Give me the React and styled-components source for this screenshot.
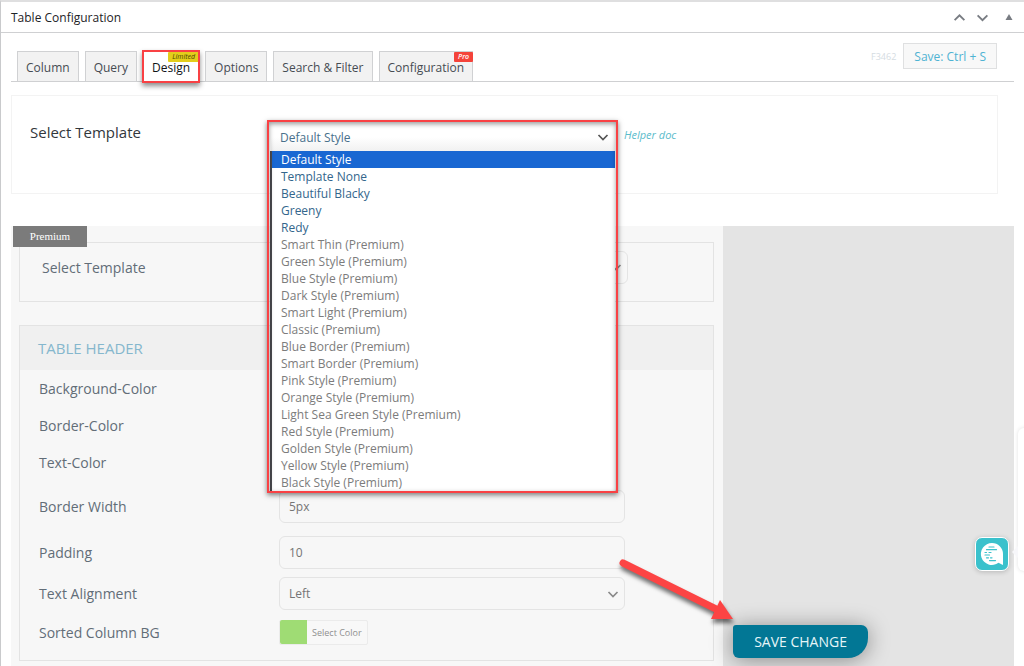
import styled, { createGlobalStyle, css } from "styled-components";

const tabs = [
  { name: "Column" },
  { name: "Query" },
  { name: "Design", badge: "Limited", active: true },
  { name: "Options" },
  { name: "Search & Filter" },
  { name: "Configuration", badge: "Pro" },
];

const freeTemplates = ["Default Style", "Template None", "Beautiful Blacky", "Greeny", "Redy"];

const premiumTemplates = [
  "Smart Thin",
  "Green Style",
  "Blue Style",
  "Dark Style",
  "Smart Light",
  "Classic",
  "Blue Border",
  "Smart Border",
  "Pink Style",
  "Orange Style",
  "Light Sea Green Style",
  "Red Style",
  "Golden Style",
  "Yellow Style",
  "Black Style",
];

const GlobalStyle = createGlobalStyle`
  *, *::before, *::after {
    box-sizing: border-box;
  }

  body {
    margin: 0;
    background: #fff;
    color: #1d2327;
    font-family: "Open Sans", "Noto Sans", sans-serif;
    font-size: 12px;
    overflow: hidden;
  }

  button, input, select {
    font: inherit;
    margin: 0;
  }

  h2, h3, ul {
    margin: 0;
    padding: 0;
  }
`;

const Panel = styled.main`
  position: relative;
  min-height: 100vh;
  border-top: 2px solid #dfdfe0;
  border-left: 1px solid #c9cacc;
`;

const PanelHeader = styled.header`
  display: flex;
  align-items: center;
  justify-content: space-between;
  height: 31px;
  padding: 0 11px 0 10px;
  border-bottom: 1px solid #cfd0d2;
`;

const PanelTitle = styled.h2`
  font-size: 12px;
  font-weight: 500;
`;

const HeaderActions = styled.div`
  display: flex;
  align-items: center;
  gap: 10px;
`;

const IconButton = styled.button`
  display: flex;
  padding: 0;
  border: none;
  background: none;
  color: #787c82;
  cursor: pointer;

  &:last-child {
    margin-left: 6px;
  }
`;

const Toolbar = styled.div`
  display: flex;
  align-items: flex-end;
  justify-content: space-between;
  height: 49px;
  margin: 0 10px;
  padding: 0 17px 0 6px;
  border-bottom: 1px solid #cfd0d2;
`;

const Tabs = styled.nav`
  display: flex;
  gap: 6px;
`;

const Tab = styled.button`
  position: relative;
  height: 30px;
  padding: 2px 8px 0;
  border: 1px solid #d0d1d3;
  border-bottom: none;
  background: ${(props) => (props.$active ? "#fff" : "#f2f2f2")};
  color: ${(props) => (props.$active ? "#101417" : "#464c52")};
  font-weight: 500;
  cursor: pointer;
`;

const TabFrame = styled.span`
  position: absolute;
  inset: -2px;
  border: 2px solid #f94144;
  box-shadow: 0 3px 5px rgba(0, 0, 0, 0.45);
  pointer-events: none;
`;

const TabBadge = styled.span`
  position: absolute;
  top: 0;
  right: -1px;
  padding: 0 4px;
  background: ${(props) => (props.$pro ? "#f4433a" : "#e3cd1b")};
  color: ${(props) => (props.$pro ? "#fff" : "#4a4300")};
  border-radius: 1px;
  font-size: 7px;
  font-style: italic;
  font-weight: ${(props) => (props.$pro ? 600 : 400)};
  line-height: 10px;
`;

const SaveHint = styled.div`
  display: flex;
  align-items: center;
  gap: 7px;
  margin-bottom: 12px;
  color: #d5dce2;
  font-size: 9px;
`;

const SaveShortcut = styled.button`
  height: 26px;
  padding: 0 10px;
  border: 1px solid #dfe0e1;
  background: #f8f8f8;
  color: #4fb3d3;
  font-size: 12px;
  cursor: pointer;
`;

const TemplateCard = styled.section`
  display: grid;
  grid-template-columns: 241px 344px 1fr;
  height: 99px;
  margin: 13px 26px 32px 10px;
  padding: 27px 18px;
  border: 1px solid #f3f3f3;
`;

const CardLabel = styled.label`
  font-size: 15px;
  line-height: 19px;
  color: #32373c;
`;

const TemplatePicker = styled.div`
  position: relative;
  height: 28px;
`;

const SelectBox = styled.div`
  position: relative;
  height: ${(props) => (props.$plain ? "28px" : "33px")};

  svg {
    position: absolute;
    top: 50%;
    right: 6px;
    margin-top: -6px;
    color: ${(props) => (props.$plain ? "#555" : "#8a8a8a")};
    pointer-events: none;
  }
`;

const fieldStyle = css`
  display: block;
  width: 100%;
  height: 33px;
  padding: 0 9px;
  border: 1px solid #e4e4e4;
  border-radius: 6px;
  background: #f7f7f7;
  color: #757575;
  font-size: 12px;
`;

const Input = styled.input`
  ${fieldStyle}
`;

const Select = styled.select`
  ${fieldStyle}
  appearance: none;
`;

const PlainSelect = styled.select`
  appearance: none;
  width: 100%;
  height: 28px;
  padding: 0 9px;
  border: none;
  background: linear-gradient(#fff 50%, #f1f1f1);
  color: #49708c;
  font-size: 12px;
`;

const OptionList = styled.ul`
  position: absolute;
  z-index: 2;
  top: 28px;
  left: -1px;
  right: 0;
  list-style: none;
  border-left: 2px solid #4b4b4f;
  background: #fff;
`;

const Option = styled.li`
  height: 17px;
  padding: 0 9px;
  background: ${(props) => (props.$selected ? "#1967d2" : "transparent")};
  color: ${(props) => (props.$selected ? "#fff" : props.$premium ? "#7c7c7c" : "#33668c")};
  line-height: 17px;
`;

const PickerFrame = styled.div`
  position: absolute;
  z-index: 3;
  top: -3px;
  left: -4px;
  right: -3px;
  height: 373px;
  border: 2px solid #f94144;
  box-shadow: 0 2px 5px rgba(0, 0, 0, 0.5), inset 0 2px 5px rgba(0, 0, 0, 0.4);
  pointer-events: none;
`;

const HelperLink = styled.a`
  padding-left: 9px;
  color: #5bbccb;
  font-size: 11px;
  font-style: italic;
  line-height: 24px;
  text-decoration: none;
`;

const Columns = styled.div`
  display: grid;
  grid-template-columns: 71fr 29fr;
  margin: 0 10px;
`;

const PremiumArea = styled.div`
  position: relative;
  padding: 16px 9px 5px 8px;
  background: #f7f7f7;
`;

const PremiumTag = styled.span`
  position: absolute;
  top: 0;
  left: 2px;
  width: 74px;
  background: #7b7b7b;
  color: #fff;
  font-family: "Liberation Serif", serif;
  font-size: 11px;
  line-height: 21px;
  text-align: center;
`;

const Box = styled.section`
  margin-bottom: ${(props) => (props.$spaced ? "23px" : "0")};
  padding-bottom: 10px;
  border: 1px solid #e3e3e3;
`;

const BoxTitle = styled.h3`
  height: 44px;
  padding: 0 18px;
  background: #f0f0f0;
  color: #85b7cd;
  font-size: 15px;
  font-weight: 400;
  line-height: 44px;
`;

const Row = styled.div`
  display: grid;
  grid-template-columns: 240px 346px;
  align-items: center;
  height: ${(props) => props.$height || 37}px;
  padding: 0 ${(props) => props.$indent || 19}px;
`;

const RowLabel = styled.label`
  color: #626d77;
  font-size: 14px;
`;

const ColorButton = styled.button`
  display: flex;
  align-items: center;
  justify-self: start;
  height: 25px;
  padding: 0 5px 0 0;
  border: 1px solid #ebebeb;
  border-radius: 2px;
  background: #f8f8f8;
  color: #8f8f8f;
  font-size: 9px;
  cursor: pointer;
`;

const Swatch = styled.span`
  width: 27px;
  height: 24px;
  margin-right: 5px;
  border-radius: 2px 0 0 2px;
  background: #9fdc74;
`;

const Side = styled.aside`
  position: relative;
  background: #e4e4e4;
`;

const SaveButton = styled.button`
  position: absolute;
  left: 10px;
  bottom: 8px;
  height: 33px;
  padding: 0 21px;
  border: none;
  border-radius: 3px 7px 20px 6px;
  background: #027795;
  box-shadow: 0 2px 22px rgba(0, 0, 0, 0.4);
  color: #e6f5f8;
  font-size: 14px;
  white-space: nowrap;
  cursor: pointer;
`;

const Arrow = styled.svg`
  position: absolute;
  left: -109px;
  bottom: 40px;
  filter: drop-shadow(1px 4px 2px rgba(0, 0, 0, 0.55));
  pointer-events: none;
`;

const ChatButton = styled.button`
  position: absolute;
  right: 5px;
  bottom: 95px;
  display: flex;
  width: 34px;
  height: 34px;
  padding: 0;
  border: 1px solid #fff;
  border-radius: 7px;
  background: #3ac1cc;
  box-shadow: 0 1px 5px rgba(0, 0, 0, 0.2);
  cursor: pointer;
`;

const ChatBubble = styled.div`
  position: absolute;
  right: -20px;
  bottom: 95px;
  width: 16px;
  height: 143px;
  border-radius: 6px;
  background: #fff;
  box-shadow: 0 0 4px rgba(0, 0, 0, 0.12);

  &::before {
    content: "";
    position: absolute;
    left: -6px;
    bottom: 13px;
    border: 6px solid transparent;
    border-left: none;
    border-right-color: #f7f7fa;
  }
`;

function Chevron({ up, size = 12 }) {
  return (
    <svg width={size} height={size} viewBox="0 0 12 12" fill="none" aria-hidden="true">
      <path d={up ? "M1.5 8.5 6 4l4.5 4.5" : "M1.5 4 6 8.5 10.5 4"} stroke="currentColor" strokeWidth="1.7" />
    </svg>
  );
}

function ChatIcon() {
  return (
    <svg width="32" height="32" viewBox="0 0 32 32" aria-hidden="true">
      <path d="M16 5a11 11 0 1 0 6.5 19.8L27 27V16A11 11 0 0 0 16 5Z" fill="#fff" />
      <g stroke="#3ac1cc" strokeWidth="1.2" strokeLinecap="round">
        <path d="M13 9h5M10.500 11.700h10M9 14.500h1.500M13 14.500h2M9 17h4.500M10.500 19.800h2M14.500 19.800h1.500M13.500 22.600h6" />
      </g>
    </svg>
  );
}

function App() {
  return (
    <>
      <GlobalStyle />
      <Panel>
        <PanelHeader>
          <PanelTitle>Table Configuration</PanelTitle>
          <HeaderActions>
            <IconButton aria-label="Move up">
              <Chevron up size={13} />
            </IconButton>
            <IconButton aria-label="Move down">
              <Chevron size={13} />
            </IconButton>
            <IconButton aria-label="Toggle panel">
              <svg width="8" height="8" viewBox="0 0 8 8" fill="currentColor">
                <path d="M4 1 7.500 7h-7Z" />
              </svg>
            </IconButton>
          </HeaderActions>
        </PanelHeader>

        <Toolbar>
          <Tabs>
            {tabs.map((tab) => (
              <Tab key={tab.name} $active={tab.active}>
                {tab.name}
                {tab.badge && <TabBadge $pro={tab.badge === "Pro"}>{tab.badge}</TabBadge>}
                {tab.active && <TabFrame />}
              </Tab>
            ))}
          </Tabs>
          <SaveHint>
            <span>F3462</span>
            <SaveShortcut>Save: Ctrl + S</SaveShortcut>
          </SaveHint>
        </Toolbar>

        <TemplateCard>
          <CardLabel htmlFor="template">Select Template</CardLabel>
          <TemplatePicker>
            <SelectBox $plain>
              <PlainSelect id="template">
                {freeTemplates.map((name) => (
                  <option key={name}>{name}</option>
                ))}
              </PlainSelect>
              <Chevron />
            </SelectBox>
            <OptionList role="listbox" aria-label="Select Template">
              {freeTemplates.map((name, i) => (
                <Option key={name} role="option" aria-selected={i === 0} $selected={i === 0}>
                  {name}
                </Option>
              ))}
              {premiumTemplates.map((name) => (
                <Option key={name} role="option" aria-selected={false} aria-disabled $premium>
                  {`${name} (Premium)`}
                </Option>
              ))}
            </OptionList>
            <PickerFrame />
          </TemplatePicker>
          <HelperLink href="#helper">Helper doc</HelperLink>
        </TemplateCard>

        <Columns>
          <PremiumArea>
            <PremiumTag>Premium</PremiumTag>
            <Box $spaced>
              <Row $height={48} $indent={22}>
                <RowLabel htmlFor="premium-template">Select Template</RowLabel>
                <SelectBox>
                  <Select id="premium-template">
                    <option>Default Style</option>
                  </Select>
                  <Chevron />
                </SelectBox>
              </Row>
            </Box>

            <Box>
              <BoxTitle>TABLE HEADER</BoxTitle>
              <Row>
                <RowLabel as="span">Background-Color</RowLabel>
              </Row>
              <Row>
                <RowLabel as="span">Border-Color</RowLabel>
              </Row>
              <Row>
                <RowLabel as="span">Text-Color</RowLabel>
              </Row>
              <Row $height={51}>
                <RowLabel htmlFor="border-width">Border Width</RowLabel>
                <Input id="border-width" defaultValue="5px" />
              </Row>
              <Row $height={41}>
                <RowLabel htmlFor="padding">Padding</RowLabel>
                <Input id="padding" defaultValue="10" />
              </Row>
              <Row $height={41}>
                <RowLabel htmlFor="text-align">Text Alignment</RowLabel>
                <SelectBox>
                  <Select id="text-align">
                    <option>Left</option>
                  </Select>
                  <Chevron />
                </SelectBox>
              </Row>
              <Row $height={36}>
                <RowLabel htmlFor="sorted-bg">Sorted Column BG</RowLabel>
                <ColorButton id="sorted-bg">
                  <Swatch />
                  Select Color
                </ColorButton>
              </Row>
            </Box>
          </PremiumArea>

          <Side>
            <SaveButton>SAVE CHANGE</SaveButton>
            <Arrow width="124" height="72" viewBox="0 0 124 72" aria-hidden="true">
              <path d="M9 9 102 55" stroke="#fc4444" strokeWidth="7" strokeLinecap="round" />
              <path d="M106 46 119 65 97 65Z" fill="#fc4444" />
            </Arrow>
            <ChatButton aria-label="Open chat">
              <ChatIcon />
            </ChatButton>
            <ChatBubble />
          </Side>
        </Columns>
      </Panel>
    </>
  );
}

export default App;
